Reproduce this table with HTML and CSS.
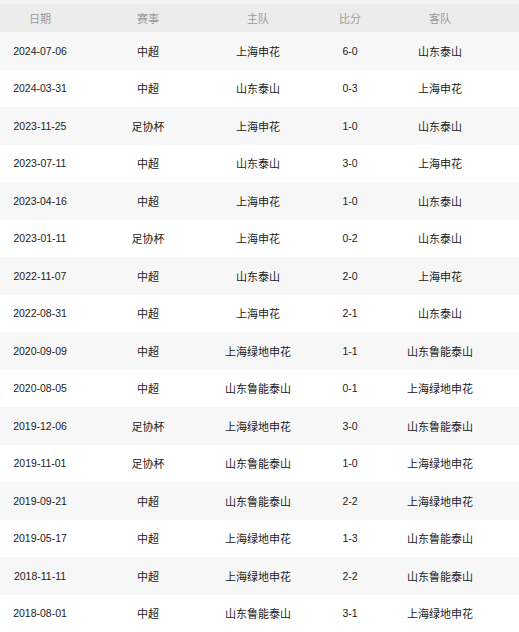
FILE: index.html
```html
<!DOCTYPE html>
<html lang="zh-CN">
<head>
<meta charset="utf-8">
<title>交锋记录</title>
<link rel="stylesheet" href="styles.css">
</head>
<body>
<div class="table">
  <div class="row head">
    <div>日期</div><div>赛事</div><div>主队</div><div>比分</div><div>客队</div>
  </div>
  <div class="row"><div class="num">2024-07-06</div><div>中超</div><div>上海申花</div><div class="num">6-0</div><div>山东泰山</div></div>
  <div class="row"><div class="num">2024-03-31</div><div>中超</div><div>山东泰山</div><div class="num">0-3</div><div>上海申花</div></div>
  <div class="row"><div class="num">2023-11-25</div><div>足协杯</div><div>上海申花</div><div class="num">1-0</div><div>山东泰山</div></div>
  <div class="row"><div class="num">2023-07-11</div><div>中超</div><div>山东泰山</div><div class="num">3-0</div><div>上海申花</div></div>
  <div class="row"><div class="num">2023-04-16</div><div>中超</div><div>上海申花</div><div class="num">1-0</div><div>山东泰山</div></div>
  <div class="row"><div class="num">2023-01-11</div><div>足协杯</div><div>上海申花</div><div class="num">0-2</div><div>山东泰山</div></div>
  <div class="row"><div class="num">2022-11-07</div><div>中超</div><div>山东泰山</div><div class="num">2-0</div><div>上海申花</div></div>
  <div class="row"><div class="num">2022-08-31</div><div>中超</div><div>上海申花</div><div class="num">2-1</div><div>山东泰山</div></div>
  <div class="row"><div class="num">2020-09-09</div><div>中超</div><div>上海绿地申花</div><div class="num">1-1</div><div>山东鲁能泰山</div></div>
  <div class="row"><div class="num">2020-08-05</div><div>中超</div><div>山东鲁能泰山</div><div class="num">0-1</div><div>上海绿地申花</div></div>
  <div class="row"><div class="num">2019-12-06</div><div>足协杯</div><div>上海绿地申花</div><div class="num">3-0</div><div>山东鲁能泰山</div></div>
  <div class="row"><div class="num">2019-11-01</div><div>足协杯</div><div>山东鲁能泰山</div><div class="num">1-0</div><div>上海绿地申花</div></div>
  <div class="row"><div class="num">2019-09-21</div><div>中超</div><div>山东鲁能泰山</div><div class="num">2-2</div><div>上海绿地申花</div></div>
  <div class="row"><div class="num">2019-05-17</div><div>中超</div><div>上海绿地申花</div><div class="num">1-3</div><div>山东鲁能泰山</div></div>
  <div class="row"><div class="num">2018-11-11</div><div>中超</div><div>上海绿地申花</div><div class="num">2-2</div><div>山东鲁能泰山</div></div>
  <div class="row"><div class="num">2018-08-01</div><div>中超</div><div>山东鲁能泰山</div><div class="num">3-1</div><div>上海绿地申花</div></div>
</div>
</body>
</html>
```

FILE: styles.css
```css
html, body {
  margin: 0;
  padding: 0;
  background: #ffffff;
}
body {
  font-family: "Noto Sans CJK SC", "Liberation Sans", sans-serif;
  font-size: 11px;
  color: #222222;
}
.table {
  width: 519px;
  padding-top: 4px;
  background: #f4f4f4;
}
.row {
  display: grid;
  grid-template-columns: 80px 136px 84px 100px 80px 39px;
  height: 37.5px;
  align-items: center;
  background: #ffffff;
}
.row > div {
  text-align: center;
  white-space: nowrap;
}
.row:nth-child(even) {
  background: #f7f7f7;
}
.row.head {
  height: 28px;
  background: #ececec;
  color: #9a9a9a;
}
.num {
  font-family: "Liberation Sans", "Noto Sans CJK SC", sans-serif;
  font-size: 10.5px;
}
```
